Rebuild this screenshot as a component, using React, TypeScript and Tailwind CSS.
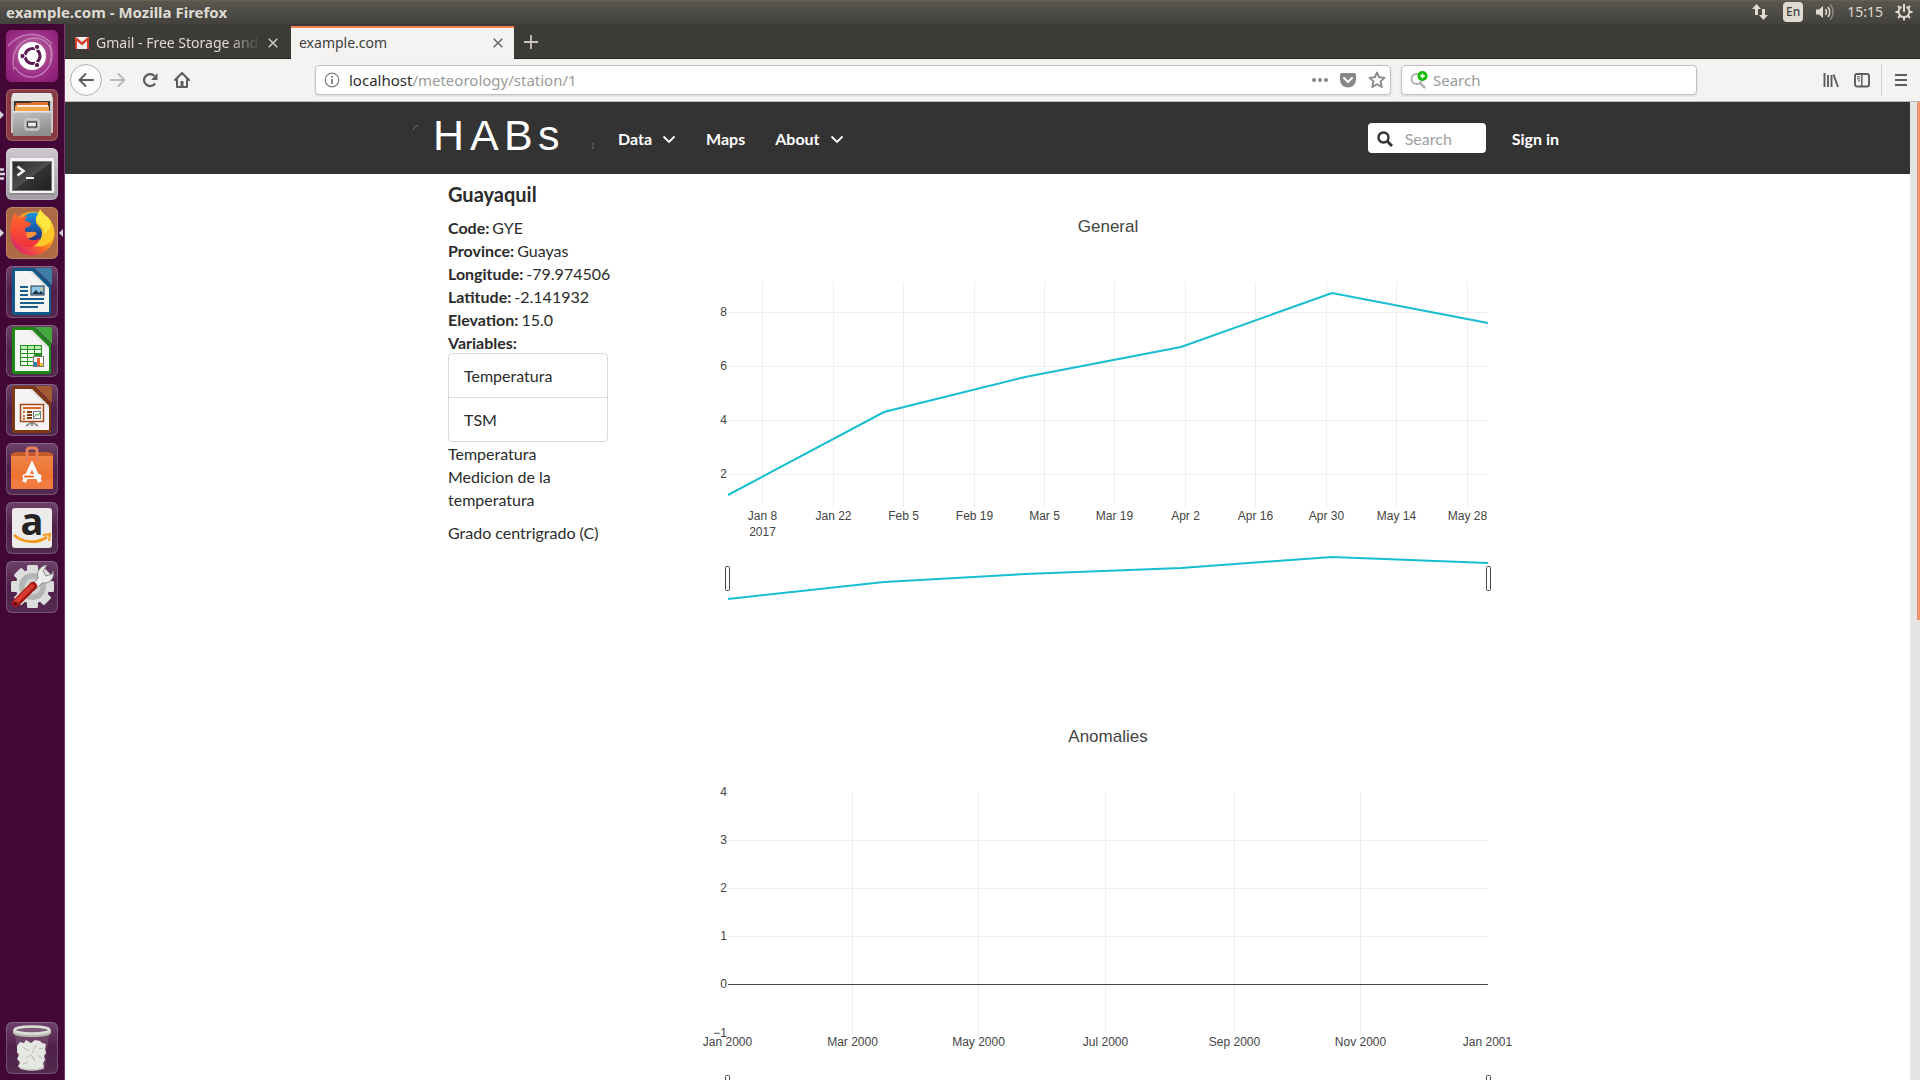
import React from "react";

/* ---------- launcher ---------- */

function UbuntuIcon() {
  return (
    <svg viewBox="0 0 52 52" className="size-full">
      <defs>
        <radialGradient id="ub" cx="50%" cy="45%" r="75%">
          <stop offset="0" stopColor="#c487b5" />
          <stop offset="0.55" stopColor="#9c2f86" />
          <stop offset="1" stopColor="#86166f" />
        </radialGradient>
      </defs>
      <rect width="52" height="52" rx="4" fill="url(#ub)" />
      <path d="M8 40C4 22 14 8 30 8c12 1 18 12 14 24M44 14c6 16-2 30-16 33-9 1-16-4-19-10M2 16C14 2 34 0 46 14" fill="none" stroke="#d9a9cf" strokeWidth="1.5" opacity=".6" />
      <circle cx="26" cy="26" r="14" fill="#fff" />
      <circle cx="26.500" cy="26" r="7.500" fill="none" stroke="#5e1750" strokeWidth="3.200" />
      <path d="M26.500 26L16 26M26.500 26L31.500 35M26.500 26L31.500 17" stroke="#fff" strokeWidth="1.600" />
      <circle cx="26.500" cy="26" r="5.800" fill="#fff" />
      <g fill="#5e1750" stroke="#fff" strokeWidth="1">
        <circle cx="16.500" cy="26" r="2.600" />
        <circle cx="31" cy="17" r="2.600" />
        <circle cx="31" cy="35" r="2.600" />
      </g>
    </svg>
  );
}

function FilesIcon() {
  return (
    <svg viewBox="0 0 52 52" className="size-full">
      <defs>
        <linearGradient id="fi" x1="0" y1="0" x2="0.300" y2="1">
          <stop offset="0" stopColor="#c4c4c4" />
          <stop offset="1" stopColor="#8f8f8f" />
        </linearGradient>
      </defs>
      <path d="M6 5h40l1 6v33H5V11z" fill="#c9c9c9" />
      <path d="M7 4h38l2 8H5z" fill="#e4e4e2" />
      <path d="M8 12h36v10H8z" fill="#3a3633" />
      <path d="M10 14h14l2-1h16v9H9z" fill="#e0702c" />
      <path d="M9 17h34v5H9z" fill="#f2a54a" />
      <path d="M11 16h31v2H11z" fill="#f8efe4" />
      <path d="M7 22h38v25H7z" fill="url(#fi)" />
      <path d="M7 22h38v1.500H7z" fill="#e6e6e6" />
      <rect x="19" y="30" width="14" height="11" rx="2" fill="#b5b5b5" stroke="#dedede" />
      <rect x="21.500" y="33" width="9" height="5" fill="#ececec" stroke="#3f3f3f" strokeWidth="1.300" />
    </svg>
  );
}

function TerminalIcon() {
  return (
    <svg viewBox="0 0 52 52" className="size-full">
      <defs>
        <linearGradient id="te" x1="0" y1="0" x2="1" y2="1">
          <stop offset="0" stopColor="#2a2a2a" />
          <stop offset="0.500" stopColor="#4d4d4d" />
          <stop offset="0.520" stopColor="#333" />
          <stop offset="1" stopColor="#1f1f1f" />
        </linearGradient>
      </defs>
      <rect x="3" y="10" width="46" height="37" rx="2" fill="#8d8a8d" />
      <rect x="3.500" y="10" width="45" height="35" rx="1.500" fill="#f2f2f2" />
      <rect x="6" y="13" width="40" height="30" fill="#777" />
      <rect x="7" y="14" width="38" height="28" fill="url(#te)" />
      <path d="M11.500 18.500l6 4.500-6 4.500" fill="none" stroke="#f4f4f4" strokeWidth="2.600" />
      <path d="M20 30h8" stroke="#f4f4f4" strokeWidth="2" />
    </svg>
  );
}

function FirefoxIcon() {
  return (
    <svg viewBox="0 0 52 52" className="size-full">
      <defs>
        <linearGradient id="ff1" x1="0.950" y1="0.100" x2="0.150" y2="0.900">
          <stop offset="0" stopColor="#ffe93b" />
          <stop offset="0.350" stopColor="#ffab1f" />
          <stop offset="0.600" stopColor="#fc6a28" />
          <stop offset="1" stopColor="#e0206a" />
        </linearGradient>
        <linearGradient id="ff2" x1="0" y1="0" x2="0" y2="1">
          <stop offset="0" stopColor="#1593e0" />
          <stop offset="1" stopColor="#22307e" />
        </linearGradient>
        <linearGradient id="ff3" x1="0" y1="0" x2="0" y2="1">
          <stop offset="0" stopColor="#ff6a2b" />
          <stop offset="1" stopColor="#f0303f" />
        </linearGradient>
      </defs>
      <circle cx="26.500" cy="26.500" r="22" fill="url(#ff1)" />
      <circle cx="28" cy="20" r="14.500" fill="url(#ff2)" />
      <path d="M34 2c-1 5-5 7-4 13 1 4 6 5 6 11 0 8-6 11-11 11 9 6 22 1 23-11 0-12-11-14-14-24z" fill="#ffc727" />
      <path d="M34 2c-1 5-5 7-3 12 2 4 8 6 7 13 4-3 7-7 7-12-1-5-8-7-11-13z" fill="#ffe740" />
      <path d="M7 10c1-1 1-3 1-4 2 1 4 3 5 5 3-1 6-2 9-2-2 1-3 3-3 5 2 0 4 1 6 2 0 3-3 4-6 5 0 2 0 3 1 4 3 1 5-1 8 0 2 0 3 1 2 3-3 1-5 4-9 3 4 3 9 3 13 0-2 8-10 11-18 8C8 35 3 27 5 18c0-3 1-6 2-8z" fill="url(#ff3)" />
      <path d="M20 25c3 1 5-1 8 0 2 0 3 1 2 3-3 1-5 4-9 3z" fill="#ffb43c" opacity=".7" />
    </svg>
  );
}

function OfficeIcon({ border, corner, children }: { border: string; corner: string; children: React.ReactNode }) {
  return (
    <svg viewBox="0 0 52 52" className="size-full">
      <path d="M6 5q0-3 3-3h19l17 17v27q0 3-3 3H9q-3 0-3-3z" fill={border} />
      <path d="M9 5h17l17 17v24H9z" fill="#f4f4f4" />
      <path d="M26 5v0l17 17v3L23 5z" fill="#cfcfcf" opacity=".5" />
      <path d="M29 2h15q2 0 2 2v15z" fill={corner} />
      {children}
    </svg>
  );
}

function WriterIcon() {
  return (
    <OfficeIcon border="#0e5a8a" corner="#3b7fa6">
      <g fill="#1b5f8c">
        <path d="M14 20h8v2h-8zM14 24h8v2h-8zM14 28h8v2h-8zM14 32h24v2H14zM14 36h24v2H14zM14 40h18v2H14z" />
      </g>
      <rect x="25" y="20" width="13" height="9" fill="#8fc6e8" stroke="#1f3440" />
      <path d="M26 28l4-4 3 3 2-2 3 3z" fill="#24343c" />
      <circle cx="35.500" cy="22.500" r="1" fill="#f6c94a" />
    </OfficeIcon>
  );
}

function CalcIcon() {
  return (
    <OfficeIcon border="#1a8a14" corner="#45a83c">
      <rect x="14" y="20" width="22" height="21" fill="#1f8f1a" />
      <g fill="#b9efb0">
        <path d="M15 21h6v3h-6zM22 21h6v3h-6zM29 21h6v3h-6z" />
      </g>
      <g fill="#f2fbf0">
        <path d="M15 25h6v3h-6zM22 25h6v3h-6zM29 25h6v3h-6zM15 29h6v3h-6zM22 29h6v3h-6zM15 33h6v3h-6zM22 33h6v3h-6zM15 37h6v3h-6zM22 37h6v3h-6z" />
      </g>
      <rect x="27.500" y="31.500" width="10" height="10" fill="#fff" stroke="#777" />
      <path d="M28 37h3v4h-3z" fill="#1584d1" />
      <path d="M31 33h3v8h-3z" fill="#e8632a" />
      <path d="M34 38h3v3h-3z" fill="#f2c230" />
    </OfficeIcon>
  );
}

function ImpressIcon() {
  return (
    <OfficeIcon border="#7d3a12" corner="#a35a30">
      <path d="M26 38l-6 4M26 38l6 4M26 38v4" stroke="#8d8d8d" strokeWidth="2" />
      <rect x="14.500" y="20.500" width="23" height="17" fill="#fbf4ef" stroke="#a2481b" strokeWidth="1.500" />
      <path d="M17 23h18v2H17zM17 27h2v2h-2zM17 31h2v2h-2zM17 34h2v2h-2z" fill="#d9672c" />
      <path d="M21 27h5v2h-5zM21 30h5v2h-5zM21 33h5v2h-5z" fill="#7d3a12" />
      <rect x="27.500" y="27.500" width="7" height="7" fill="#fff" stroke="#777" />
      <path d="M28.500 33l2-3 1.500 1.500 2-3" fill="none" stroke="#2a9a2a" />
    </OfficeIcon>
  );
}

function SoftwareIcon() {
  return (
    <svg viewBox="0 0 52 52" className="size-full">
      <defs>
        <linearGradient id="so" x1="0" y1="0" x2="0" y2="1">
          <stop offset="0" stopColor="#ef8145" />
          <stop offset="1" stopColor="#ee6a26" />
        </linearGradient>
      </defs>
      <path d="M5 11l4-2h34l4 2v3H5z" fill="#c4592a" />
      <path d="M5 13h42v33H5z" fill="url(#so)" />
      <path d="M5 36h42v10H5z" fill="#f48a55" opacity=".5" />
      <path d="M21 17V8q0-3 3-3h4q3 0 3 3v9" fill="none" stroke="#e4815a" strokeWidth="3" />
      <path d="M18 39l8-17 8 17" fill="none" stroke="#fff" strokeWidth="4" />
      <rect x="16.500" y="31" width="19" height="5" rx="2.500" fill="#fff" />
      <rect x="18" y="32.500" width="10" height="2" rx="1" fill="#ee6a26" />
    </svg>
  );
}

function AmazonIcon() {
  return (
    <svg viewBox="0 0 52 52" className="size-full">
      <rect x="6" y="6" width="40" height="40" rx="3" fill="#ececec" />
      <text x="26" y="33" textAnchor="middle" fontFamily="Open Sans, sans-serif" fontWeight="700" fontSize="38" fill="#222">a</text>
      <path d="M8 33c9 8 23 9 33 2" fill="none" stroke="#f49a1a" strokeWidth="2.800" />
      <path d="M37 33l7-1-1 7" fill="none" stroke="#f49a1a" strokeWidth="2" />
    </svg>
  );
}

function SettingsIcon() {
  return (
    <svg viewBox="0 0 52 52" className="size-full">
      <g fill="#dcdcdc">
        {[0, 45, 90, 135].map((a) => (
          <rect key={a} x="21" y="4" width="11" height="43" rx="1.500" transform={`rotate(${a} 26.500 25.500)`} />
        ))}
        <circle cx="26.500" cy="25.500" r="17" />
      </g>
      <circle cx="26.500" cy="25.500" r="13.500" fill="#b4b4b4" />
      <circle cx="26.500" cy="25.500" r="8" fill="#d2d2d2" />
      <path d="M24 26l8-9c-2-6 2-12 9-13l-4 6 3 5 6-2 1-3c2 8-4 13-11 12l-8 8z" fill="#ececec" stroke="#8a8a8a" />
      <path d="M10 42l17-17" stroke="#a51414" strokeWidth="8" strokeLinecap="round" />
      <path d="M10 41l16-16" stroke="#d63b32" strokeWidth="4.500" strokeLinecap="round" />
      <circle cx="9.500" cy="42.500" r="1.800" fill="#5a0d0d" />
    </svg>
  );
}

function TrashIcon() {
  return (
    <svg viewBox="0 0 52 52" className="size-full">
      <path d="M9 12l4 33q13 5 26 0l4-33z" fill="#fff" opacity=".12" />
      <path d="M11 24l3-4 4 1 2-3 5 3 4-3 5 1 2 2 4 1-1 5 1 4-2 3 1 4-2 3 1 4q-12 5-26 0l2-5-3-3 2-4-2-3z" fill="#e6e6e3" />
      <path d="M17 25l6 4M30 23l-4 8M20 36l5-3 4 6M32 33l4 4M17 42l5-2M33 27l4-1" stroke="#b9b9b4" fill="none" />
      <path d="M7 8v3q2 4 19 4t19-4V8z" fill="#b9b9b6" />
      <ellipse cx="26" cy="8" rx="17.500" ry="3.500" fill="#7b5c76" stroke="#deded9" strokeWidth="2.500" />
      <path d="M14 46q12 4 24 0" stroke="#cfcfcf" fill="none" strokeWidth="1.500" />
    </svg>
  );
}

const glass = "bg-linear-to-b from-[#6d4268] via-[#4f1f48] to-[#552b50]";

const apps = [
  { name: "Search your computer", icon: <UbuntuIcon />, tile: "bg-[#8f207b]", left: 0, right: false },
  { name: "Files", icon: <FilesIcon />, tile: "bg-[#8a3a42]", left: 1, right: false },
  { name: "Terminal", icon: <TerminalIcon />, tile: "bg-linear-to-b from-[#cdc9ce] to-[#a39ca6]", left: 3, right: false },
  { name: "Firefox Web Browser", icon: <FirefoxIcon />, tile: "bg-[#ae6a45]", left: 1, right: true },
  { name: "LibreOffice Writer", icon: <WriterIcon />, tile: glass, left: 0, right: false },
  { name: "LibreOffice Calc", icon: <CalcIcon />, tile: glass, left: 0, right: false },
  { name: "LibreOffice Impress", icon: <ImpressIcon />, tile: glass, left: 0, right: false },
  { name: "Ubuntu Software", icon: <SoftwareIcon />, tile: glass, left: 0, right: false },
  { name: "Amazon", icon: <AmazonIcon />, tile: glass, left: 0, right: false },
  { name: "System Settings", icon: <SettingsIcon />, tile: glass, left: 0, right: false },
];

function LauncherTile({ name, icon, tile, left, right }: (typeof apps)[number]) {
  return (
    <div className="relative flex w-full justify-center pr-px">
      {left === 1 && (
        <svg viewBox="0 0 5 10" className="absolute left-0 top-5 h-3 w-1"><path d="M0 0l5 5-5 5z" fill="#d8d3d8" /></svg>
      )}
      {left === 3 && (
        <svg viewBox="0 0 5 12" className="absolute left-0 top-5 h-3 w-[5px]"><path d="M0 1.500h4M0 6h5M0 10.500h4" stroke="#d8d3d8" strokeWidth="2.400" /></svg>
      )}
      <button aria-label={name} className={`size-[52px] overflow-hidden rounded-md shadow-[inset_0_0_0_1px_rgba(255,255,255,0.2)] ${tile}`}>
        {icon}
      </button>
      {right && (
        <svg viewBox="0 0 5 10" className="absolute right-px top-5 h-3 w-1"><path d="M5 0L0 5l5 5z" fill="#d8d3d8" /></svg>
      )}
    </div>
  );
}

function Launcher() {
  return (
    <nav aria-label="Launcher" className="flex w-[65px] shrink-0 flex-col justify-between border-r border-[#7a3a70] bg-[#420737] pt-1.5 pb-1.5">
      <div className="flex flex-col gap-[7px]">
        {apps.map((a) => <LauncherTile key={a.name} {...a} />)}
      </div>
      <LauncherTile name="Trash" icon={<TrashIcon />} tile={glass} left={0} right={false} />
    </nav>
  );
}

/* ---------- desktop panel ---------- */

function TopPanel() {
  return (
    <header className="flex h-6 shrink-0 items-center justify-between border-t border-[#62604f] bg-linear-to-b from-[#59574f] to-[#42413c] pr-[7px] pb-0.5 pl-1.5 text-[#dfdbd2]">
      <h1 className="text-[15px] leading-5 font-bold">example.com - Mozilla Firefox</h1>
      <div className="flex items-center">
        <svg viewBox="0 0 18 18" className="mr-3.5 size-[18px]" fill="#dfdbd2">
          <path d="M5.500 1L10 6H7v6H4V6H1zM12.500 17L8 12h3V6h3v6h3z" />
        </svg>
        <span className="mr-3 flex h-5 w-5 items-center justify-center rounded-sm bg-[#dfdbd2] text-xs font-medium text-[#45443f]">En</span>
        <svg viewBox="0 0 20 18" className="mr-3 h-[18px] w-5" fill="none">
          <path d="M1 6.500h3L8 3v12l-4-3.500H1z" fill="#dfdbd2" />
          <path d="M10.500 6q2 3 0 6M13 4q3.500 5 0 10" stroke="#dfdbd2" strokeWidth="1.500" />
          <path d="M15.500 1.500q5 7.500 0 15" stroke="#8d8a82" strokeWidth="1.500" />
        </svg>
        <time className="mr-3 text-sm">15:15</time>
        <svg viewBox="0 0 18 18" className="size-[18px]" fill="none" stroke="#dfdbd2">
          <path d="M6.500 3.800A5.500 5.500 0 1 0 11.500 3.800" strokeWidth="2" />
          <path d="M9 1v8" strokeWidth="2" />
          <path d="M.5 9H4M14 9h3.500M9 14v3.500M3 3l2 2M15 3l-2 2M3 15l2-2M15 15l-2-2" strokeWidth="2" />
        </svg>
      </div>
    </header>
  );
}

/* ---------- browser chrome ---------- */

function CloseIcon({ color }: { color: string }) {
  return (
    <svg viewBox="0 0 10 10" className="size-2.5"><path d="M.7.7l8.600 8.600M9.300.7L.7 9.300" stroke={color} strokeWidth="1.600" /></svg>
  );
}

function TabStrip() {
  return (
    <div role="tablist" className="flex h-[35px] shrink-0 bg-[#3c3b37] pt-0.5 shadow-[inset_0_-1px_0_#23221f]">
      <div role="tab" aria-selected="false" className="flex w-[226px] items-center pr-[13px] pl-2.5">
        <svg viewBox="0 0 14 12" className="mr-[7px] h-3 w-3.5 shrink-0">
          <path d="M0 0h14v12H0z" fill="#eee" />
          <path d="M0 1q0-1 1-1l6 5 6-5q1 0 1 1v11h-2V4L7 8.500 2 4v8H0z" fill="#d9402f" />
        </svg>
        <span className="min-w-0 flex-1 overflow-hidden text-sm whitespace-nowrap text-[#dfdbd2] [mask-image:linear-gradient(to_right,#000_80%,transparent)]">Gmail - Free Storage and</span>
        <button aria-label="Close tab" className="ml-2"><CloseIcon color="#c9c6be" /></button>
      </div>
      <div role="tab" aria-selected="true" className="flex w-[223px] items-center justify-between border-t-2 border-[#f0804f] bg-[#f4f3f1] pr-[11px] pb-0.5 pl-2 text-sm text-[#3d3d3d]">
        <span>example.com</span>
        <button aria-label="Close tab"><CloseIcon color="#6b6b6b" /></button>
      </div>
      <button aria-label="New tab" className="px-2.5 pb-0.5">
        <svg viewBox="0 0 14 14" className="size-3.5"><path d="M7 0v14M0 7h14" stroke="#c9c6be" strokeWidth="1.800" /></svg>
      </button>
    </div>
  );
}

function Toolbar() {
  return (
    <div className="flex h-[43px] shrink-0 items-center border-b border-[#bdbbb8] bg-[#f4f3f1] pr-3 pl-[5px]">
      <button aria-label="Back" className="flex size-8 items-center justify-center rounded-full border border-[#b1b1b1] bg-[#fcfcfc]">
        <svg viewBox="0 0 16 16" className="size-4" fill="none" stroke="#5c5c5c" strokeWidth="2" strokeLinecap="round" strokeLinejoin="round"><path d="M15 8H1.500M7.500 2l-6 6 6 6" /></svg>
      </button>
      <button aria-label="Forward" className="ml-2">
        <svg viewBox="0 0 16 16" className="size-4" fill="none" stroke="#b9b9b9" strokeWidth="2" strokeLinecap="round" strokeLinejoin="round"><path d="M1 8h13.500M8.500 2l6 6-6 6" /></svg>
      </button>
      <button aria-label="Reload" className="ml-4">
        <svg viewBox="0 0 16 16" className="size-4" fill="none" stroke="#5c5c5c" strokeWidth="2.200"><path d="M13 11.500A6 6 0 1 1 12.500 4" /><path d="M15.500 1v7H9z" fill="#5c5c5c" stroke="none" /></svg>
      </button>
      <button aria-label="Home" className="ml-4">
        <svg viewBox="0 0 16 16" className="size-4" fill="none" stroke="#5c5c5c" strokeWidth="2" strokeLinejoin="round" strokeLinecap="round"><path d="M1 8l7-7 7 7M3 7.500V15h10V7.500" /><path d="M8 9v5" strokeWidth="3" strokeLinecap="butt" /></svg>
      </button>
      <div className="ml-[125px] flex h-[30px] flex-[1058] items-center rounded border border-[#c4c2c0] bg-white px-2 shadow-sm">
        <svg viewBox="0 0 16 16" className="mr-[9px] size-4 shrink-0" fill="none" stroke="#7a7a7a"><circle cx="8" cy="8" r="6.800" strokeWidth="1.200" /><path d="M8 7v5M8 4v1.800" strokeWidth="1.800" /></svg>
        <a href="#station" className="flex-1 text-[15px] text-[#9a9a9a]"><span className="text-[#2e2e2e]">localhost</span>/meteorology/station/1</a>
        <button aria-label="Page actions">
          <svg viewBox="0 0 16 4" className="h-1 w-4" fill="#888"><circle cx="2" cy="2" r="2" /><circle cx="8" cy="2" r="2" /><circle cx="14" cy="2" r="2" /></svg>
        </button>
        <button aria-label="Save to Pocket" className="ml-3">
          <svg viewBox="0 0 16 16" className="size-4"><path d="M1.500 1h13q1.500 0 1.500 1.500V8A8 7.500 0 0 1 0 8V2.500Q0 1 1.500 1z" fill="#888" /><path d="M4 6l4 4 4-4" fill="none" stroke="#fff" strokeWidth="2" strokeLinecap="round" strokeLinejoin="round" /></svg>
        </button>
        <button aria-label="Bookmark" className="-mr-1 ml-3">
          <svg viewBox="0 0 18 18" className="size-[18px]" fill="none" stroke="#888" strokeWidth="1.900" strokeLinejoin="round"><path d="M9 1.500l2.200 4.800 5.300.6-4 3.500 1.200 5.600L9 13.300 4.300 16l1.200-5.600-4-3.500 5.300-.6z" /></svg>
        </button>
      </div>
      <label className="ml-2.5 flex h-[30px] flex-[278] items-center rounded border border-[#c4c2c0] bg-white px-2 shadow-sm">
        <svg viewBox="0 0 18 18" className="mr-[5px] size-[18px] shrink-0" fill="none"><circle cx="6.500" cy="8" r="5" stroke="#b1b1b1" strokeWidth="2" /><path d="M10 12l5 5" stroke="#b1b1b1" strokeWidth="2.500" /><circle cx="12.500" cy="5" r="5" fill="#12bc00" /><path d="M12.500 2.500v5M10 5h5" stroke="#fff" strokeWidth="1.500" /></svg>
        <input aria-label="Search the web" placeholder="Search" className="w-full min-w-0 text-[15px] outline-none placeholder:text-[#9a9a9a]" />
      </label>
      <div className="flex-[126]" />
      <button aria-label="Library">
        <svg viewBox="0 0 16 16" className="size-4" fill="none" stroke="#5c5c5c" strokeWidth="1.900"><path d="M1.500 1v14M5 3v12M8.500 3v12M10.500 2.500L15 15" /></svg>
      </button>
      <button aria-label="Sidebars" className="ml-[15px]">
        <svg viewBox="0 0 16 16" className="size-4" fill="none" stroke="#5c5c5c"><rect x="1" y="2" width="14" height="12.500" rx="2" strokeWidth="1.900" /><path d="M7.800 2v12" strokeWidth="1.400" /><path d="M3 4.800h3M3 6.800h3M4 8.800h2" strokeWidth="1" /></svg>
      </button>
      <div className="mr-3 ml-[11px] h-8 w-px bg-[#d3d1cf]" />
      <button aria-label="Menu">
        <svg viewBox="0 0 14 14" className="size-3.5" stroke="#5c5c5c" strokeWidth="2"><path d="M1 2h12M1 7h12M1 12h12" /></svg>
      </button>
    </div>
  );
}

/* ---------- web page ---------- */

function Chevron() {
  return (
    <svg viewBox="0 0 14 14" className="ml-2.5 size-3.5"><path d="M1.500 4.500L7 10l5.500-5.500" fill="none" stroke="#fff" strokeWidth="1.800" /></svg>
  );
}

function SiteHeader() {
  return (
    <header className="bg-[#333]">
      <div className="mx-auto flex h-[72px] max-w-[1161px] items-center pr-[9px] pl-1 text-base font-bold text-white">
        <a href="#home" aria-label="HABs" className="mr-[23px]">
          <svg viewBox="0 0 184 60" className="h-[60px] w-[184px]">
            <g fontFamily="Liberation Sans, Arial, sans-serif" fontSize="43" fontWeight="400" fill="#fff">
              <text x="22" y="42">H</text>
              <text x="59" y="42">A</text>
              <text x="93" y="42">B</text>
              <text x="127" y="42">s</text>
            </g>
            <path d="M2 22q1-3 5-5" fill="none" stroke="#777" />
            <path d="M182 35v2M182 38v3" stroke="#777" />
          </svg>
        </a>
        <nav className="flex items-center gap-[30px] pt-0.5">
          <button className="flex items-center">Data<Chevron /></button>
          <a href="#maps">Maps</a>
          <button className="flex items-center">About<Chevron /></button>
        </nav>
        <label className="mr-[26px] ml-auto flex h-[30px] w-[118px] items-center rounded bg-white pt-0.5 pr-2 pl-[9px]">
          <svg viewBox="0 0 16 16" className="mr-3 size-4 shrink-0" fill="none" stroke="#333"><circle cx="6.500" cy="6.500" r="5" strokeWidth="2.400" /><path d="M10 10l5 5" strokeWidth="3" /></svg>
          <input aria-label="Search the site" placeholder="Search" className="w-full min-w-0 font-normal text-[#333] outline-none placeholder:text-[#a0a0a0]" />
        </label>
        <a href="#signin" className="pt-0.5">Sign in</a>
      </div>
    </header>
  );
}

const facts = [
  ["Code:", "GYE"],
  ["Province:", "Guayas"],
  ["Longitude:", "-79.974506"],
  ["Latitude:", "-2.141932"],
  ["Elevation:", "15.0"],
  ["Variables:", ""],
];

function StationInfo() {
  return (
    <aside className="w-40 shrink-0 pt-2 text-base leading-[23px] text-[#2b2b2b]">
      <h2 className="mb-2.5 text-xl leading-6 font-bold">Guayaquil</h2>
      <dl className="-mb-px">
        {facts.map(([k, v]) => (
          <div key={k} className="flex gap-[3px] whitespace-nowrap">
            <dt className="font-bold">{k}</dt>
            <dd>{v}</dd>
          </div>
        ))}
      </dl>
      <div className="divide-y divide-[#dcdcdd] rounded border border-[#d8d8d9]">
        <button className="block h-11 w-full px-[15px] text-left">Temperatura</button>
        <button className="block h-[43px] w-full px-[15px] text-left">TSM</button>
      </div>
      <p>Temperatura</p>
      <p>Medicion de la temperatura</p>
      <p className="mt-2.5">Grado centrigrado (C)</p>
    </aside>
  );
}

type Tick = { at: number; label: string; sub?: string };

const LEFT = 80;
const WIDTH = 760;
const TOP = 100;

function Handle({ x, y }: { x: number; y: number }) {
  return <rect x={x - 2} y={y - 0.5} width="4" height="24" rx="1" fill="#fff" stroke="#444" />;
}

function Chart({ title, height, xTicks, yTicks, points, range, rangeTop }: {
  title: string;
  height: number;
  xTicks: Tick[];
  yTicks: Tick[];
  points?: [number, number][];
  range?: [number, number][];
  rangeTop: number;
}) {
  const bottom = TOP + height;
  const line = (p: [number, number][]) => p.map(([x, y]) => `${LEFT + x},${TOP + y}`).join(" ");
  const edge = (at: number) => at === 0 || at === WIDTH;
  return (
    <svg viewBox="0 0 920 510" className="block w-full" role="img" aria-label={title} fontFamily="Liberation Sans, Arial, sans-serif" fontSize="12" fill="#444">
      <text x="460" y="50" textAnchor="middle" fontSize="17">{title}</text>
      <g stroke="#eee" shapeRendering="crispEdges">
        {xTicks.filter((t) => !edge(t.at)).map((t) => (
          <path key={t.label} d={`M${LEFT + t.at - 0.5} ${TOP}V${bottom}`} />
        ))}
        {yTicks.filter((t) => t.at > 0 && t.at < height).map((t) => (
          <path key={t.label} d={`M${LEFT} ${TOP + t.at + 0.5}H${LEFT + WIDTH}`} stroke={t.label === "0" ? "#444" : "#eee"} />
        ))}
      </g>
      {xTicks.map((t) => (
        <text key={t.label} x={LEFT + t.at - 0.5} y={bottom + 13} textAnchor="middle">
          {t.label}
          {t.sub && <tspan x={LEFT + t.at - 0.5} dy="16">{t.sub}</tspan>}
        </text>
      ))}
      {yTicks.map((t) => (
        <text key={t.label} x={LEFT - 1} y={TOP + t.at + 4} textAnchor="end">{t.label}</text>
      ))}
      {points && <polyline points={line(points)} fill="none" stroke="#17becf" strokeWidth="2" />}
      {range && <polyline points={line(range)} fill="none" stroke="#17becf" strokeWidth="2" />}
      <Handle x={LEFT - 0.5} y={rangeTop} />
      <Handle x={LEFT + WIDTH + 0.5} y={rangeTop} />
    </svg>
  );
}

const generalX: Tick[] = [
  { at: 35, label: "Jan 8", sub: "2017" },
  { at: 106, label: "Jan 22" },
  { at: 176, label: "Feb 5" },
  { at: 247, label: "Feb 19" },
  { at: 317, label: "Mar 5" },
  { at: 387, label: "Mar 19" },
  { at: 458, label: "Apr 2" },
  { at: 528, label: "Apr 16" },
  { at: 599, label: "Apr 30" },
  { at: 669, label: "May 14" },
  { at: 740, label: "May 28" },
];
const generalY: Tick[] = [
  { at: 30, label: "8" },
  { at: 84, label: "6" },
  { at: 138, label: "4" },
  { at: 192, label: "2" },
];
const generalPoints: [number, number][] = [[0, 213], [156, 130], [297, 95], [453, 65], [604, 11], [760, 41]];
const generalRange: [number, number][] = [[0, 317], [156, 300], [297, 292], [453, 286], [604, 275], [760, 281]];

const anomaliesX: Tick[] = [
  { at: 0, label: "Jan 2000" },
  { at: 125, label: "Mar 2000" },
  { at: 251, label: "May 2000" },
  { at: 378, label: "Jul 2000" },
  { at: 507, label: "Sep 2000" },
  { at: 633, label: "Nov 2000" },
  { at: 760, label: "Jan 2001" },
];
const anomaliesY: Tick[] = [
  { at: 0, label: "4" },
  { at: 48, label: "3" },
  { at: 96, label: "2" },
  { at: 144, label: "1" },
  { at: 192, label: "0" },
  { at: 241, label: "−1" },
];

export default function App() {
  return (
    <div className="flex h-screen flex-col overflow-hidden bg-white font-['Noto_Sans',sans-serif]">
      <TopPanel />
      <div className="flex min-h-0 flex-1">
        <Launcher />
        <div className="flex min-w-0 flex-1 flex-col">
          <TabStrip />
          <Toolbar />
          <div className="flex min-h-0 flex-1">
            <div className="min-w-0 flex-1 overflow-y-auto font-[Lato,sans-serif] [scrollbar-width:none]">
              <SiteHeader />
              <main className="mx-auto flex max-w-[1161px] gap-10 pl-[41px]">
                <StationInfo />
                <section className="min-w-0 flex-1 pt-2">
                  <Chart title="General" height={225} xTicks={generalX} yTicks={generalY} points={generalPoints} range={generalRange} rangeTop={385} />
                  <Chart title="Anomalies" height={241} xTicks={anomaliesX} yTicks={anomaliesY} rangeTop={384} />
                </section>
              </main>
            </div>
            <div className="flex w-2.5 shrink-0 justify-end bg-[#e4e4e4]">
              <div className="h-[53%] w-[3px] bg-[#f2906b]" />
            </div>
          </div>
        </div>
      </div>
    </div>
  );
}
